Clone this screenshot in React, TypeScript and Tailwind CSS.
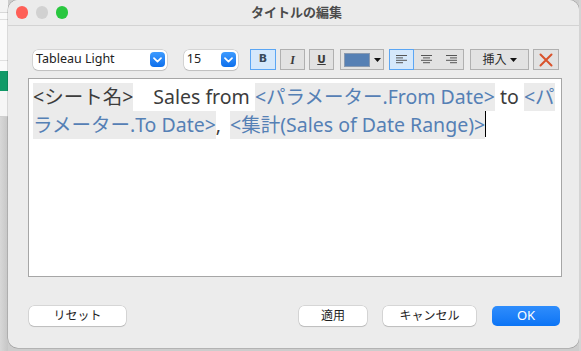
import React from "react";

const Tok = ({ children }: { children: React.ReactNode }) => (
  <span className="bg-[#ebebeb] text-[#5580b5] h-[28px] inline-flex items-center">{children}</span>
);

const Plain = ({ children }: { children: React.ReactNode }) => (
  <span className="text-[#3c3c3c] h-[28px] inline-flex items-center whitespace-pre">{children}</span>
);

const Chevron = () => (
  <div className="w-[15px] h-[15px] rounded-[4px] bg-gradient-to-b from-[#3d9bff] to-[#0b6fec] flex items-center justify-center">
    <svg width="9" height="6" viewBox="0 0 9 6">
      <path d="M1 1.2 L4.5 4.6 L8 1.2" stroke="white" strokeWidth="1.7" fill="none" strokeLinecap="round" strokeLinejoin="round" />
    </svg>
  </div>
);

const TbBtn = ({ children, w, active }: { children: React.ReactNode; w: string; active?: boolean }) => (
  <div
    className={`${w} h-[21px] flex items-center justify-center border ${
      active ? "bg-[#d5e8fb] border-[#5ba6f4]" : "bg-[#e2e2e2] border-[#b0b0b0]"
    }`}
  >
    {children}
  </div>
);

const AlignIcon = ({ kind }: { kind: "l" | "c" | "r" }) => {
  const lens = [11, 7, 11, 7];
  return (
    <svg width="11" height="9" viewBox="0 0 11 9">
      {lens.map((len, i) => {
        const x1 = kind === "l" ? 0 : kind === "r" ? 11 - len : (11 - len) / 2;
        return <rect key={i} x={x1} y={i * 2.4} width={len} height="1" fill="#555" />;
      })}
    </svg>
  );
};

const Tri = () => (
  <svg width="7" height="4" viewBox="0 0 7 4">
    <path d="M0 0 L7 0 L3.5 4 Z" fill="#111" />
  </svg>
);

const FootBtn = ({ children, w }: { children: React.ReactNode; w: string }) => (
  <div
    className={`${w} h-[20px] rounded-[5px] bg-white flex items-center justify-center text-[12px] text-[#1e1e1e] shadow-[0_0_0_0.5px_rgba(0,0,0,0.18),0_1px_1px_rgba(0,0,0,0.12)]`}
  >
    {children}
  </div>
);

export default function App() {
  return (
    <div className="w-[581px] h-[351px] flex bg-[#cdcdcd] overflow-hidden [font-family:'Noto_Sans','Noto_Sans_CJK_JP',sans-serif]">
      {/* background app strip */}
      <div className="w-[8px] flex flex-col shrink-0">
        <div className="h-[13px] bg-[#f3f3f3] border-b border-[#d8d8d8]" />
        <div className="h-[7px] bg-[#fafafa] border-b border-[#dedede]" />
        <div className="h-[41px] bg-[#fafafa] border-b border-[#e0e0e0]" />
        <div className="h-[10px] bg-[#fafafa]" />
        <div className="h-[20px] bg-[#119a68]" />
        <div className="h-[26px] bg-[#f6f6f6] border-b border-[#d0d0d0]" />
        <div className="flex-1 bg-gradient-to-r from-[#d8d8d8] to-[#c6c6c6]" />
      </div>

      {/* window */}
      <div className="w-[571px] h-[348px] shrink-0 rounded-[10px] bg-[#ececec] flex flex-col overflow-hidden shadow-[0_0_0_0.5px_rgba(0,0,0,0.25)]">
        {/* title bar */}
        <div className="h-[26px] shrink-0 relative flex items-center border-b border-[#d3d3d3] bg-[#ebebeb]">
          <div className="flex gap-[7.5px] pl-[7.5px]">
            <div className="w-[12.5px] h-[12.5px] rounded-full bg-[#fe5f57]" />
            <div className="w-[12.5px] h-[12.5px] rounded-full bg-[#d1d1d1]" />
            <div className="w-[12.5px] h-[12.5px] rounded-full bg-[#29c73f]" />
          </div>
          <div className="absolute inset-0 flex items-center justify-center text-[13px] font-bold text-[#4b4b4b] pl-[6px]">
            タイトルの編集
          </div>
        </div>

        {/* body */}
        <div className="flex flex-col px-[20px]">
          {/* toolbar */}
          <div className="flex items-center h-[21px] mt-[23px] pl-[5px]">
            <div className="w-[136px] h-[20px] bg-white rounded-[5px] shadow-[0_0_0_0.5px_rgba(0,0,0,0.2),0_1px_1px_rgba(0,0,0,0.1)] flex items-center justify-between pl-[3px] pr-[2px]">
              <span className="text-[12.5px] text-[#222]">Tableau Light</span>
              <Chevron />
            </div>
            <div className="w-[55px] ml-[17px] h-[20px] bg-white rounded-[5px] shadow-[0_0_0_0.5px_rgba(0,0,0,0.2),0_1px_1px_rgba(0,0,0,0.1)] flex items-center justify-between pl-[3px] pr-[2px]">
              <span className="text-[12.5px] text-[#222]">15</span>
              <Chevron />
            </div>
            <div className="ml-[12px]">
              <TbBtn w="w-[26px]" active>
                <span className="text-[11px] font-bold text-[#3a4a5a] [font-family:'DejaVu_Sans',sans-serif]">B</span>
              </TbBtn>
            </div>
            <div className="ml-[4px]">
              <TbBtn w="w-[25px]">
                <span className="text-[12px] font-bold italic text-[#3a3a3a] [font-family:'Liberation_Serif',serif]">I</span>
              </TbBtn>
            </div>
            <div className="ml-[4px]">
              <TbBtn w="w-[25px]">
                <span className="text-[10.5px] font-bold underline text-[#3a3a3a] [font-family:'DejaVu_Sans',sans-serif]">U</span>
              </TbBtn>
            </div>
            <div className="ml-[6px]">
              <div className="w-[44px] h-[21px] flex items-center gap-[4px] border border-[#b0b0b0] bg-[#e2e2e2] pl-[3px]">
                <div className="w-[26px] h-[14px] bg-[#5680b4] border border-[#8a9ab0]" />
                <Tri />
              </div>
            </div>
            <div className="ml-[5px] flex">
              <TbBtn w="w-[25px]" active>
                <AlignIcon kind="l" />
              </TbBtn>
              <div className="w-[25px] h-[21px] flex items-center justify-center border-y border-[#b0b0b0] bg-[#e2e2e2]">
                <AlignIcon kind="c" />
              </div>
              <div className="w-[25px] h-[21px] flex items-center justify-center border border-l-0 border-[#b0b0b0] bg-[#e2e2e2]">
                <AlignIcon kind="r" />
              </div>
            </div>
            <div className="ml-[6px]">
              <div className="w-[59px] h-[21px] flex items-center justify-center gap-[3px] border border-[#b0b0b0] bg-[#e2e2e2]">
                <span className="text-[12px] text-[#2a2a2a]">挿入</span>
                <Tri />
              </div>
            </div>
            <div className="ml-[4px]">
              <TbBtn w="w-[26px]">
                <svg width="14" height="14" viewBox="0 0 14 14">
                  <path d="M1.5 1.5 L12.5 12.5 M12.5 1.5 L1.5 12.5" stroke="#d9532c" strokeWidth="2" strokeLinecap="round" />
                </svg>
              </TbBtn>
            </div>
          </div>

          {/* text area */}
          <div className="mt-[8px] w-[534px] h-[199px] bg-white border border-[#a6a6a6] pt-[4px] pl-[4px] text-[19.5px] leading-[28px]">
            <div className="flex h-[28px] whitespace-pre">
              <Plain>
                <span className="bg-[#ebebeb]">{"<シート名>"}</span>
              </Plain>
              <span className="w-[20px]" />
              <Plain>{"Sales from "}</Plain>
              <Tok>{"<パラメーター.From Date>"}</Tok>
              <Plain>{" to "}</Plain>
              <Tok>{"<パ"}</Tok>
            </div>
            <div className="flex h-[28px] whitespace-pre">
              <Tok>{"ラメーター.To Date>"}</Tok>
              <Plain>{","}</Plain>
              <span className="w-[9px]" />
              <Tok>{"<集計(Sales of Date Range)>"}</Tok>
              <span className="w-[1px] h-[26px] bg-black" />
            </div>
          </div>

          {/* footer */}
          <div className="flex items-center mt-[29px] pl-[1px]">
            <FootBtn w="w-[97px]">リセット</FootBtn>
            <div className="flex-1" />
            <FootBtn w="w-[68px]">適用</FootBtn>
            <div className="w-[16px]" />
            <FootBtn w="w-[93px]">キャンセル</FootBtn>
            <div className="w-[16px]" />
            <div className="w-[68px] h-[20px] rounded-[5px] bg-gradient-to-b from-[#2e8dfc] to-[#0a74f5] flex items-center justify-center text-[13px] text-white mr-[-1px]">
              OK
            </div>
          </div>
        </div>
      </div>
      <div className="flex-1 bg-[#d4d4d4]" />
    </div>
  );
}
